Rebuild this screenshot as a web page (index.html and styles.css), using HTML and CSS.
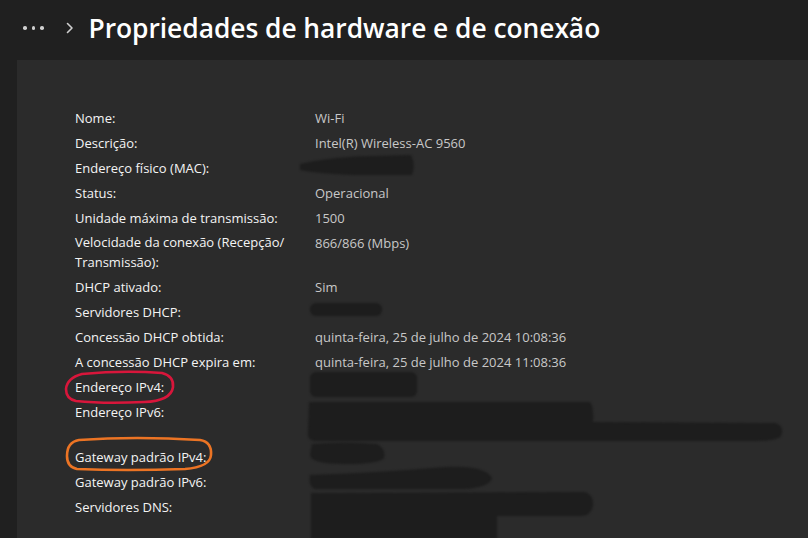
FILE: index.html
```html
<!DOCTYPE html>
<html lang="pt-BR">
<head>
<meta charset="utf-8">
<title>Propriedades de hardware e de conexão</title>
<link rel="stylesheet" href="styles.css">
</head>
<body>
<header class="header">
  <span class="dots"><i></i><i></i><i></i></span>
  <svg class="chevron" width="8" height="12" viewBox="0 0 8 12"><path d="M1.5 1.5 L6 6 L1.5 10.5" fill="none" stroke="#cfcfcf" stroke-width="1.6" stroke-linecap="round" stroke-linejoin="round"/></svg>
  <h1 class="title">Propriedades de hardware e de conexão</h1>
</header>
<main class="card">
  <div class="props">
    <div class="label">Nome:</div><div class="value">Wi-Fi</div>
    <div class="label">Descrição:</div><div class="value">Intel(R) Wireless-AC 9560</div>
    <div class="label">Endereço físico (MAC):</div>
    <div class="value"><svg class="redact" width="120" height="20"><path d="M-15 6 Q20 -2 60 -2 L96 -3 Q101 7 97 17 L40 17 Q5 16 -15 12 Z"/></svg></div>
    <div class="label">Status:</div><div class="value">Operacional</div>
    <div class="label">Unidade máxima de transmissão:</div><div class="value">1500</div>
    <div class="label tight">Velocidade da conexão (Recepção/ Transmissão):</div><div class="value">866/866 (Mbps)</div>
    <div class="label">DHCP ativado:</div><div class="value">Sim</div>
    <div class="label">Servidores DHCP:</div>
    <div class="value"><svg class="redact" width="80" height="20"><rect x="-5" y="1" width="72" height="13" rx="6"/></svg></div>
    <div class="label">Concessão DHCP obtida:</div><div class="value">quinta-feira, 25 de julho de 2024 10:08:36</div>
    <div class="label">A concessão DHCP expira em:</div><div class="value">quinta-feira, 25 de julho de 2024 11:08:36</div>
    <div class="label annotated">Endereço IPv4:<svg class="ring ring-red" width="112" height="36" viewBox="0 0 112 36"><path d="M18 4 Q60 0 98 3 Q110 6 109 17 Q107 31 80 32 Q40 34 12 31 Q2 29 2 19 Q3 8 18 4"/></svg></div>
    <div class="value"><svg class="redact" width="110" height="20"><rect x="-5" y="-5" width="107" height="25" rx="6"/></svg></div>
    <div class="label">Endereço IPv6:</div>
    <div class="value two"><svg class="redact" width="480" height="40"><path d="M-6 2 Q-8 0 0 0 L275 0 Q279 4 278 20 L460 21 Q470 24 466 34 Q462 39 440 39 L0 39 Q-8 38 -7 30 Z"/></svg></div>
    <div class="label annotated">Gateway padrão IPv4:<svg class="ring ring-orange" width="150" height="36" viewBox="0 0 150 36"><path d="M14 3 Q70 -1 135 3 Q147 5 146 18 Q145 30 120 32 Q60 34 12 32 Q2 30 2 19 Q2 5 14 3"/></svg></div>
    <div class="value"><svg class="redact" width="80" height="20"><path d="M-3 -3 Q30 -6 62 -3 Q71 2 69 11 Q64 17 30 17 Q-4 17 -5 8 Z"/></svg></div>
    <div class="label">Gateway padrão IPv6:</div>
    <div class="value"><svg class="redact" width="180" height="20"><path d="M-5 3 Q60 1 130 -5 Q170 -7 177 6 Q175 15 150 17 L0 17 Q-7 14 -5 3 Z"/></svg></div>
    <div class="label">Servidores DNS:</div>
    <div class="value two"><svg class="redact" width="290" height="40"><path d="M-4 -4 L270 -5 Q279 -2 278 9 Q276 19 265 19 L182 19 L182 42 L-4 42 Z"/></svg></div>
  </div>
</main>
</body>
</html>
```
FILE: styles.css
```css
html, body {
  margin: 0;
  padding: 0;
  height: 100%;
  background: #202020;
  overflow: hidden;
}
body {
  font-family: "Open Sans", "Noto Sans", sans-serif;
  color: #ffffff;
  display: flex;
  flex-direction: column;
}
.header {
  height: 60px;
  display: flex;
  align-items: center;
  padding-left: 23px;
  box-sizing: border-box;
  flex: none;
}
.dots {
  display: flex;
  gap: 5px;
  margin-top: -4px;
}
.dots i {
  display: block;
  width: 3.5px;
  height: 3.5px;
  border-radius: 50%;
  background: #cfcfcf;
}
.chevron {
  margin-left: 22px;
  margin-top: -4px;
}
.title {
  margin: -5px 0 0 15px;
  font-size: 26.4px;
  font-weight: 600;
  letter-spacing: -0.05px;
  color: #ffffff;
}
.card {
  flex: 1;
  margin-left: 17px;
  background: #2b2b2b;
  padding: 48px 0 0 58px;
}
.props {
  display: grid;
  grid-template-columns: 230px 1fr;
  column-gap: 10px;
  row-gap: 5px;
  font-size: 13px;
  line-height: 20px;
}
.label {
  color: #f4f4f4;
}
.label.tight {
  line-height: 19.5px;
}
.value {
  color: #c8c8c8;
  min-height: 20px;
}
.value.two {
  height: 40px;
}
.redact {
  display: block;
  overflow: visible;
  fill: #1d1d1d;
  filter: blur(1px);
}
.annotated {
  position: relative;
}
.ring {
  position: absolute;
  overflow: visible;
  fill: none;
  stroke-width: 2.6;
  stroke-linecap: round;
}
.ring-red {
  left: -11px;
  top: -7px;
  stroke: #d8163b;
}
.ring-orange {
  left: -10px;
  top: -10px;
  stroke: #ec7424;
}
```
